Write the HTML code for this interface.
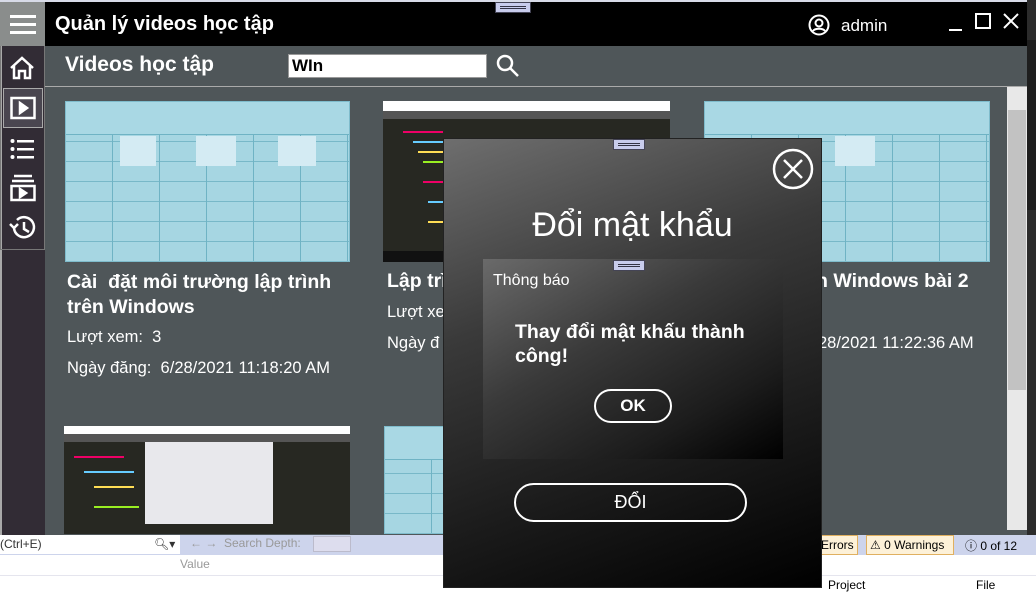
<!DOCTYPE html>
<html><head><meta charset="utf-8"><style>
*{margin:0;padding:0;box-sizing:border-box}
body{width:1036px;height:592px;overflow:hidden;position:relative;background:#f5f5f5;font-family:"Liberation Sans","DejaVu Sans",sans-serif}
.a{position:absolute}
.tbl{background:#a6d6e2;background-image:repeating-linear-gradient(90deg,transparent 0 46px,#6fb3c4 46px 47px),repeating-linear-gradient(0deg,transparent 0 19px,#78b8c8 19px 20px);border:1px solid #7fbccc}
.tbl .hd{position:absolute;left:0;right:0;top:0;height:33px;background:#a9d8e4;border-bottom:1px solid #6fb3c4}
.tbl .lt{position:absolute;background:#d4ebf3}
.code{background:#272822}
.code .top{position:absolute;left:0;right:0;top:0;height:10px;background:#fff}
.code .bar{position:absolute;left:0;right:0;top:10px;height:8px;background:#555}
.ln{position:absolute;height:2px}
.t{color:#fff;white-space:nowrap}
</style></head><body>
<div class="a" style="left:0;top:0;width:1036px;height:3px;background:#d8dbe8"></div>
<div class="a" style="left:1027px;top:0;width:9px;height:535px;background:#2b2b2b"></div>
<div class="a" style="left:1027px;top:40px;width:9px;height:170px;background:#1e1e1e"></div>
<div class="a" style="left:0;top:2px;width:1027px;height:533px;background:#4f5659"></div>
<div class="a" style="left:0;top:2px;width:1027px;height:44px;background:#000"></div>
<div class="a" style="left:0;top:2px;width:45px;height:44px;background:#8a8d8c"></div>
<div class="a" style="left:10px;top:15px;width:26px;height:3px;background:#fff;box-shadow:0 8px 0 #fff,0 16px 0 #fff"></div>
<div class="a t" style="left:55px;top:13px;font-size:20px;font-weight:bold">Quản lý videos học tập</div>
<div class="a" style="left:495px;top:2px;width:36px;height:11px;background:#c8ccec;border:1px solid #445"></div>
<div class="a" style="left:500px;top:6px;width:26px;height:1px;background:#334;box-shadow:0 2px 0 #334"></div>
<svg class="a" style="left:808px;top:14px" width="22" height="22" viewBox="0 0 22 22" fill="none" stroke="#fff" stroke-width="2"><circle cx="11" cy="11" r="9.5"/><circle cx="11" cy="9" r="3.5"/><path d="M5 17c2-3 10-3 12 0"/></svg>
<div class="a t" style="left:841px;top:16px;font-size:17px">admin</div>
<div class="a" style="left:949px;top:29px;width:13px;height:2px;background:#fff"></div>
<div class="a" style="left:975px;top:13px;width:16px;height:16px;border:2px solid #fff"></div>
<svg class="a" style="left:1003px;top:13px" width="16" height="16" stroke="#fff" stroke-width="2"><path d="M1 1L15 15M15 1L1 15"/></svg>
<div class="a" style="left:0;top:46px;width:45px;height:489px;background:#322c35;border-left:2px solid #a9a9a9"></div>
<div class="a" style="left:0;top:46px;width:45px;height:204px;border:1px solid #777;border-top:none"></div>
<div class="a" style="left:3px;top:88px;width:40px;height:40px;border:1px solid #aaa;background:#4a4650"></div>
<svg class="a" style="left:9px;top:55px" width="26" height="26" fill="none" stroke="#fff" stroke-width="2.5"><path d="M2 13L13 3L24 13M5 11V23H10V16H16V23H21V11"/></svg>
<svg class="a" style="left:10px;top:96px" width="26" height="24" fill="none" stroke="#fff" stroke-width="2.5"><rect x="1.5" y="2" width="23" height="20"/><path d="M10 7L17 12L10 17Z" fill="#fff"/></svg>
<svg class="a" style="left:10px;top:138px" width="26" height="22" fill="#fff"><circle cx="2.5" cy="3" r="2"/><circle cx="2.5" cy="11" r="2"/><circle cx="2.5" cy="19" r="2"/><rect x="7" y="2" width="17" height="2.5"/><rect x="7" y="10" width="17" height="2.5"/><rect x="7" y="18" width="17" height="2.5"/></svg>
<svg class="a" style="left:10px;top:174px" width="26" height="28" fill="none" stroke="#fff" stroke-width="2.5"><path d="M4 2H22M2 7H24"/><rect x="1.5" y="12" width="23" height="14"/><path d="M10 15L16 19L10 23Z" fill="#fff"/></svg>
<svg class="a" style="left:9px;top:214px" width="28" height="28" fill="none" stroke="#fff" stroke-width="2.5"><path d="M5 14A10 10 0 1 0 8 6"/><path d="M1 10L5 14L9 10"/><path d="M15 8V15L20 18"/></svg>
<div class="a t" style="left:65px;top:53px;font-size:21px;font-weight:bold">Videos học tập</div>
<div class="a" style="left:288px;top:54px;width:199px;height:24px;background:#fff;border:1px solid #999;font-size:17px;font-weight:bold;padding:1px 3px">WIn</div>
<svg class="a" style="left:496px;top:54px" width="24" height="24" fill="none" stroke="#fff" stroke-width="2.5"><circle cx="9" cy="9" r="7"/><path d="M14 14L22 22"/></svg>
<div class="a" style="left:45px;top:86px;width:982px;height:1px;background:#aaa"></div>
<div class="a" style="left:1007px;top:87px;width:20px;height:443px;background:#e8e8e8"></div>
<div class="a" style="left:1008px;top:110px;width:18px;height:280px;background:#c2c2c2"></div>
<div class="a tbl" style="left:65px;top:101px;width:285px;height:161px"><div class="hd"></div><div class="lt" style="left:54px;top:34px;width:36px;height:30px"></div><div class="lt" style="left:130px;top:34px;width:40px;height:30px"></div><div class="lt" style="left:212px;top:34px;width:38px;height:30px"></div></div>
<div class="a code" style="left:383px;top:101px;width:287px;height:161px"><div class="top"></div><div class="bar"></div>
<div class="ln" style="left:20px;top:30px;width:40px;background:#e06"></div><div class="ln" style="left:30px;top:40px;width:60px;background:#6cf"></div><div class="ln" style="left:35px;top:50px;width:50px;background:#fd5"></div><div class="ln" style="left:40px;top:60px;width:45px;background:#9e2"></div><div class="ln" style="left:40px;top:80px;width:55px;background:#e06"></div><div class="ln" style="left:45px;top:100px;width:40px;background:#6cf"></div><div class="ln" style="left:45px;top:120px;width:35px;background:#fd5"></div><div class="ln" style="left:0;top:150px;width:287px;height:11px;background:#111"></div></div>
<div class="a tbl" style="left:704px;top:101px;width:286px;height:161px"><div class="hd"></div><div class="lt" style="left:130px;top:34px;width:40px;height:30px"></div></div>
<div class="a t" style="left:67px;top:270px;font-size:19.5px;font-weight:bold;line-height:25px">Cài&nbsp; đặt môi trường lập trình<br>trên Windows</div>
<div class="a t" style="left:67px;top:328px;font-size:16.5px">Lượt xem:&nbsp; 3</div>
<div class="a t" style="left:67px;top:359px;font-size:16.5px">Ngày đăng:&nbsp; 6/28/2021 11:18:20 AM</div>
<div class="a t" style="left:387px;top:270px;font-size:19.5px;font-weight:bold">Lập trì</div>
<div class="a t" style="left:387px;top:303px;font-size:16.5px">Lượt xe</div>
<div class="a t" style="left:387px;top:334px;font-size:16.5px">Ngày đ</div>
<div class="a t" style="left:816px;top:270px;font-size:19.5px;font-weight:bold">n Windows bài 2</div>
<div class="a t" style="left:818px;top:334px;font-size:16.5px">28/2021 11:22:36 AM</div>
<div class="a code" style="left:64px;top:426px;width:286px;height:108px"><div class="top" style="height:8px"></div><div class="bar" style="top:8px"></div><div class="a" style="left:81px;top:16px;width:128px;height:82px;background:#e8e8ec"></div><div class="ln" style="left:10px;top:30px;width:50px;background:#e06"></div><div class="ln" style="left:20px;top:45px;width:50px;background:#6cf"></div><div class="ln" style="left:30px;top:60px;width:40px;background:#fd5"></div><div class="ln" style="left:30px;top:80px;width:45px;background:#9e2"></div></div>
<div class="a tbl" style="left:384px;top:426px;width:60px;height:108px"><div class="hd"></div></div>
<div class="a" style="left:0;top:535px;width:1036px;height:57px;background:#fff"></div>
<div class="a" style="left:0;top:535px;width:1036px;height:20px;background:#cdd4ec"></div>
<div class="a" style="left:0;top:535px;width:180px;height:19px;background:#fff;font-size:12px;color:#333;padding:2px 0">(Ctrl+E)<span style="position:absolute;left:154px">🔍︎▾</span></div>
<div class="a" style="left:190px;top:536px;font-size:12px;color:#999">← → &nbsp;Search Depth:</div>
<div class="a" style="left:313px;top:536px;width:38px;height:16px;background:#dde;border:1px solid #bbc"></div>
<div class="a" style="left:180px;top:557px;font-size:12px;color:#999">Value</div>
<div class="a" style="left:0;top:575px;width:1036px;height:1px;background:#e5e5ee"></div>
<div class="a" style="left:818px;top:535px;width:40px;height:20px;background:#fdf1d8;border:1px solid #e0b060;font-size:12px;padding:2px 2px">Errors</div>
<div class="a" style="left:866px;top:535px;width:88px;height:20px;background:#fdf1d8;border:1px solid #e0b060;font-size:12px;padding:2px 3px">⚠ 0 Warnings</div>
<div class="a" style="left:965px;top:537px;font-size:12px">ⓘ 0 of 12</div>
<div class="a" style="left:776px;top:578px;width:260px;height:14px;background:#fff;font-size:12px;padding-left:52px">Project<span style="position:absolute;left:200px">File</span></div>
<div class="a" style="left:443px;top:138px;width:379px;height:450px;background:linear-gradient(160deg,#6e6e6e 0%,#3a3a3a 35%,#1a1a1a 70%,#000 100%);border:1px solid #222"></div>
<div class="a" style="left:613px;top:139px;width:32px;height:11px;background:#c8ccec;border:1px solid #445"></div>
<div class="a" style="left:618px;top:143px;width:22px;height:1px;background:#334;box-shadow:0 2px 0 #334"></div>
<svg class="a" style="left:772px;top:148px" width="42" height="42" fill="none" stroke="#fff" stroke-width="2.5"><circle cx="21" cy="21" r="19"/><path d="M12 12L30 30M30 12L12 30"/></svg>
<div class="a t" style="left:443px;top:206px;width:379px;text-align:center;font-size:34px;font-weight:300">Đổi mật khẩu</div>
<div class="a" style="left:483px;top:259px;width:300px;height:200px;background:linear-gradient(150deg,#6a6a6a 0%,#3a3a3a 40%,#1c1c1c 75%,#000 100%)"></div>
<div class="a" style="left:613px;top:260px;width:32px;height:11px;background:#c8ccec;border:1px solid #445"></div>
<div class="a" style="left:618px;top:264px;width:22px;height:1px;background:#334;box-shadow:0 2px 0 #334"></div>
<div class="a t" style="left:493px;top:272px;font-size:16px">Thông báo</div>
<div class="a t" style="left:515px;top:320px;font-size:19.5px;font-weight:bold;line-height:24px">Thay đổi mật khấu thành<br>công!</div>
<div class="a t" style="left:594px;top:389px;width:78px;height:34px;border:2px solid #fff;border-radius:17px;text-align:center;font-size:17px;font-weight:bold;line-height:30px">OK</div>
<div class="a t" style="left:514px;top:483px;width:233px;height:39px;border:2px solid #fff;border-radius:20px;text-align:center;font-size:18px;line-height:35px">ĐỔI</div>
</body></html>
